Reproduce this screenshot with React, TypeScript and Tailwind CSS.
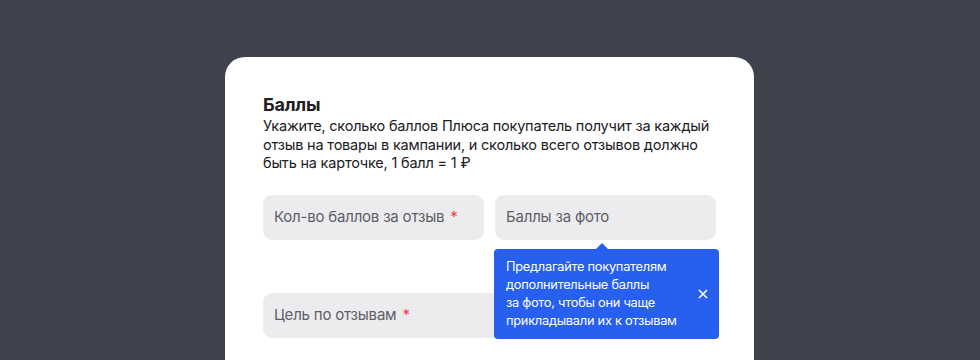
import React from "react";

const Field = ({ label, required, className = "" }: { label: string; required?: boolean; className?: string }) => (
  <div className={`h-[45px] rounded-[9px] bg-[#ececef] flex items-center px-[11px] text-[15px] text-[#5e5e66] tracking-[-0.2px] ${className}`}>
    <span>{label}</span>
    {required && <span className="ml-[6px] text-[#f0413c]">*</span>}
  </div>
);

export default function App() {
  return (
    <div
      className="w-[980px] h-[360px] overflow-hidden bg-[#3f434e] pt-[57px]"
      style={{ fontFamily: "Inter, 'Open Sans', 'Noto Sans', sans-serif" }}
    >
      <div className="ml-[225px] w-[529px] h-[400px] rounded-[20px] bg-white px-[38px] pt-[36px]">
        <h2 className="text-[18px] leading-[24px] font-bold text-[#21201f] tracking-[-0.2px]">Баллы</h2>
        <p className="w-[470px] text-[14.5px] leading-[18.5px] text-[#21201f] tracking-[-0.2px]">
          Укажите, сколько баллов Плюса покупатель получит за каждый отзыв на товары в кампании, и сколько всего отзывов должно быть на карточке, 1 балл = 1 ₽
        </p>

        <div className="mt-[22px] grid grid-cols-2 gap-x-[11px]">
          <Field label="Кол-во баллов за отзыв" required />
          <div className="relative">
            <Field label="Баллы за фото" />
            <div className="absolute left-[-1px] top-[54px] z-10 w-[225px] h-[90px] rounded-[4px] bg-[#2760ee] text-white flex items-center pl-[12px] pr-[10px]">
              <span className="absolute left-[102px] top-[-6px] w-0 h-0 border-l-[6px] border-r-[6px] border-b-[6px] border-l-transparent border-r-transparent border-b-[#2760ee]" />
              <p className="flex-1 text-[12.8px] leading-[18px] tracking-[-0.25px]">
                Предлагайте покупателям
                <br />
                дополнительные баллы
                <br />
                за фото, чтобы они чаще
                <br />
                прикладывали их к отзывам
              </p>
              <svg width="10" height="10" viewBox="0 0 10 10" className="shrink-0 mr-[1px]">
                <path d="M1 1L9 9M9 1L1 9" stroke="white" strokeWidth="1.6" />
              </svg>
            </div>
          </div>
        </div>

        <Field label="Цель по отзывам" required className="mt-[53px]" />
      </div>
    </div>
  );
}
